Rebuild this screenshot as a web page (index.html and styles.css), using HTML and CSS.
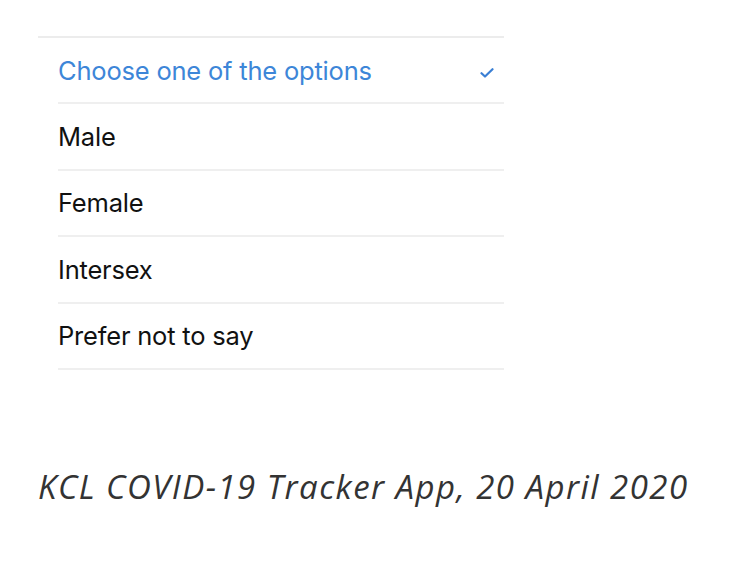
FILE: index.html
```html
<!DOCTYPE html>
<html>
<head>
<meta charset="utf-8">
<link rel="stylesheet" href="styles.css">
</head>
<body>
<div class="figure">
  <div class="list">
    <div class="row selected">
      <span class="label">Choose one of the options</span>
      <svg class="check" width="14" height="10" viewBox="0 0 14 10"><path d="M1.5 5.2 L5 8.5 L12.5 1.2" fill="none" stroke="#3a7fd4" stroke-width="2.2" stroke-linecap="round" stroke-linejoin="round"/></svg>
    </div>
    <div class="row"><span class="label">Male</span></div>
    <div class="row"><span class="label">Female</span></div>
    <div class="row"><span class="label">Intersex</span></div>
    <div class="row"><span class="label">Prefer not to say</span></div>
  </div>
  <p class="caption">KCL COVID-19 Tracker App, 20 April 2020</p>
</div>
</body>
</html>
```
FILE: styles.css
```css
html, body {
  margin: 0;
  padding: 0;
  background: #ffffff;
}
.figure {
  padding-top: 36px;
  padding-left: 38px;
}
.list {
  width: 466px;
  border-top: 2px solid #ececec;
}
.row {
  box-sizing: border-box;
  height: 66.4px;
  margin-left: 20px;
  border-bottom: 2px solid #efefef;
  display: flex;
  align-items: center;
  justify-content: space-between;
  padding-right: 10px;
  font-family: Inter, "Liberation Sans", sans-serif;
  font-size: 25.5px;
  letter-spacing: -0.2px;
  color: #111111;
}
.row.selected {
  color: #3d86d8;
}
.check {
  display: block;
  margin-top: 5px;
}
.caption {
  margin: 95px 0 0 0;
  font-family: "Open Sans", sans-serif;
  font-style: italic;
  font-weight: 400;
  font-size: 33px;
  letter-spacing: 1.45px;
  line-height: 44px;
  color: #333333;
}
```
